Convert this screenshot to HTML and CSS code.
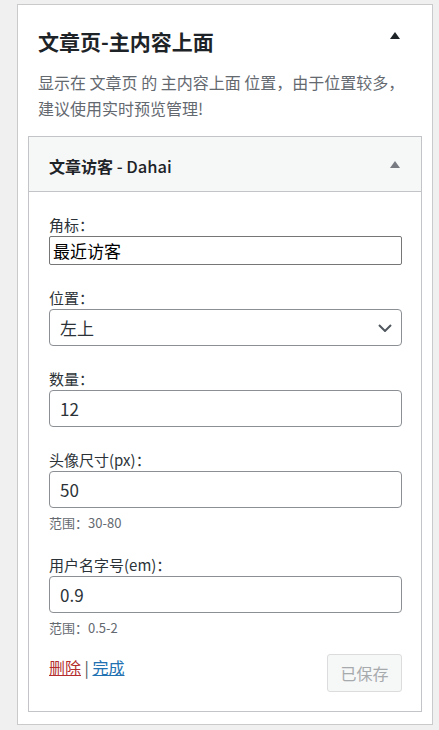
FILE: index.html
```html
<!DOCTYPE html>
<html lang="zh-CN">
<head>
<meta charset="utf-8">
<title>文章页-主内容上面</title>
<link rel="stylesheet" href="styles.css">
</head>
<body>
<div class="area">
  <div class="area-head">
    <h2 class="area-title">文章页-主内容上面</h2>
    <span class="tri tri-dark"></span>
  </div>
  <p class="area-desc">显示在 文章页 的 主内容上面 位置，由于位置较多，建议使用实时预览管理!</p>

  <div class="widget">
    <div class="widget-top">
      <h3 class="widget-title">文章访客 <span class="widget-sub">- Dahai</span></h3>
      <span class="tri tri-gray"></span>
    </div>
    <div class="widget-inside">
      <div class="field">
        <label class="label">角标：</label>
        <input class="plain" type="text" value="最近访客">
      </div>
      <div class="field">
        <label class="label">位置：</label>
        <div class="select">
          <span>左上</span>
          <svg class="chev" width="14" height="8" viewBox="0 0 14 8"><path d="M1 1 L7 7 L13 1" fill="none" stroke="#50575e" stroke-width="2"/></svg>
        </div>
      </div>
      <div class="field">
        <label class="label">数量：</label>
        <input class="wp" type="text" value="12">
      </div>
      <div class="field">
        <label class="label">头像尺寸(px)：</label>
        <input class="wp" type="text" value="50">
        <div class="hint">范围：30-80</div>
      </div>
      <div class="field">
        <label class="label">用户名字号(em)：</label>
        <input class="wp" type="text" value="0.9">
        <div class="hint">范围：0.5-2</div>
      </div>
      <div class="actions">
        <div class="links"><a class="del" href="#">删除</a> | <a class="done" href="#">完成</a></div>
        <button class="saved" type="button">已保存</button>
      </div>
    </div>
  </div>
</div>
</body>
</html>
```

FILE: styles.css
```css
* { box-sizing: border-box; }
body {
  margin: 0;
  background: #f0f0f1;
  font-family: "Noto Sans CJK SC", "Noto Sans", sans-serif;
  color: #2c3338;
}
.area {
  margin: 4px 0 0 17px;
  width: 416px;
  background: #fff;
  border: 1px solid #c9cacc;
  padding: 0 10px 12px;
}
.area-head {
  display: flex;
  justify-content: space-between;
  align-items: flex-start;
  padding: 21px 22px 0 10px;
}
.area-title {
  margin: 0;
  font-size: 21px;
  line-height: 30px;
  font-weight: 700;
  color: #1d2327;
}
.tri {
  width: 0;
  height: 0;
  border-left: 5px solid transparent;
  border-right: 5px solid transparent;
  border-bottom: 7px solid #1d2327;
}
.tri-dark { margin-top: 6px; }
.tri-gray { border-bottom-color: #787c82; }
.area-desc {
  margin: 13px 0 0;
  padding: 0 10px;
  font-size: 16px;
  line-height: 26px;
  color: #646970;
}
.widget {
  margin-top: 15px;
  border: 1px solid #c3c4c7;
}
.widget-top {
  height: 55px;
  background: #f6f7f7;
  border-bottom: 1px solid #c3c4c7;
  display: flex;
  align-items: center;
  justify-content: space-between;
  padding: 0 21px 0 20px;
}
.widget-title {
  margin: 0;
  padding-top: 3px;
  font-size: 16px;
  line-height: 22px;
  font-weight: 700;
  color: #1d2327;
}
.widget-sub {
  font-weight: 500;
  font-size: 16.5px;
}
.widget-inside {
  padding: 23px 19px 19px 20px;
}
.field + .field { margin-top: 23px; }
.label {
  display: block;
  font-size: 15px;
  line-height: 20px;
  margin-bottom: 1px;
  color: #2c3338;
}
.plain {
  display: block;
  width: 100%;
  height: 29px;
  margin: 0;
  border: 1px solid #767676;
  border-radius: 2px;
  padding: 0 3px;
  font-family: inherit;
  font-size: 17px;
  color: #000;
  background: #fff;
}
.wp {
  display: block;
  width: 100%;
  height: 37px;
  margin: 0;
  border: 1px solid #8c8f94;
  border-radius: 4px;
  padding: 0 10px;
  font-family: inherit;
  font-size: 17px;
  color: #2c3338;
  background: #fff;
}
.select {
  display: flex;
  align-items: center;
  justify-content: space-between;
  height: 37px;
  border: 1px solid #8c8f94;
  border-radius: 4px;
  padding: 0 9px 0 10px;
  font-size: 17px;
  color: #2c3338;
}
.chev { display: block; }
.hint {
  margin-top: 6px;
  font-size: 13px;
  line-height: 18px;
  color: #646970;
}
.field + .actions { margin-top: 17px; }
.actions {
  display: flex;
  justify-content: space-between;
  align-items: flex-start;
}
.links {
  margin-top: 2px;
  font-size: 16px;
  line-height: 22px;
  color: #50575e;
}
.del { color: #b32d2e; text-decoration: underline; }
.done { color: #2271b1; text-decoration: underline; }
.saved {
  width: 75px;
  height: 38px;
  margin: 0;
  padding: 0;
  border: 1px solid #dcdcde;
  border-radius: 3px;
  background: #f6f7f7;
  color: #a7aaad;
  font-family: inherit;
  font-size: 16px;
}
```
